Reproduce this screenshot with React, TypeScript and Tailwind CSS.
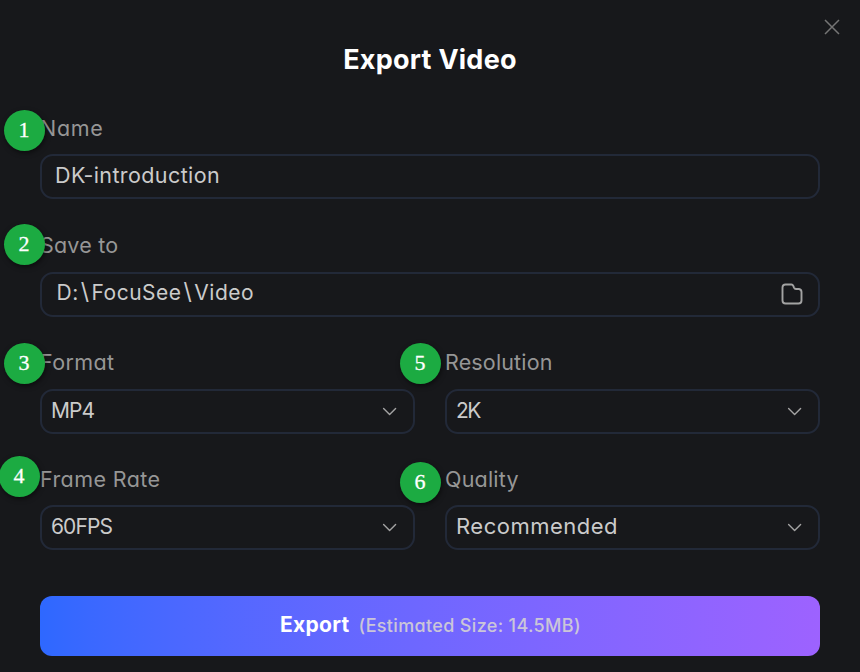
import type { ReactNode } from "react";
import clsx from "clsx";

interface FieldProps {
  step: number;
  label: string;
  labelClass?: string;
  badgeClass: string;
  children: ReactNode;
}

function Field({ step, label, labelClass, badgeClass, children }: FieldProps) {
  return (
    <div className="relative">
      <div className="h-[26px] text-[21.5px] leading-[26px] text-[#969696]">
        <span className={clsx("whitespace-pre", labelClass)}>{label}</span>
      </div>
      <span
        className={clsx(
          "absolute flex h-[41px] w-[41px] justify-center rounded-full bg-[#1cab42] font-['Liberation_Serif',serif] text-[22px] leading-[40px] text-white shadow-[1px_2px_5px_rgba(0,0,0,0.5)] [-webkit-text-stroke:0.3px_white]",
          badgeClass
        )}
      >
        {step}
      </span>
      {children}
    </div>
  );
}

function Chevron() {
  return (
    <svg className="h-[10px] w-4" viewBox="0 0 16 10" fill="none" stroke="#a3a3a3" strokeWidth="1.4" strokeLinecap="round" strokeLinejoin="round">
      <path d="M1.6 1.6 7.6 7.6 13.6 1.6" />
    </svg>
  );
}

interface BoxProps {
  value: ReactNode;
  className: string;
  valueClass?: string;
  icon?: ReactNode;
}

function Box({ value, className, valueClass, icon }: BoxProps) {
  return (
    <div
      className={clsx(
        "flex h-[45px] items-center justify-between rounded-[13px] border-2 border-[#222938] pr-[15px] text-[21px] leading-[26px] text-[#cbcbcb]",
        className
      )}
    >
      <span className={clsx("whitespace-pre", valueClass)}>{value}</span>
      {icon}
    </div>
  );
}

export default function App() {
  return (
    <div className="flex h-[672px] w-[860px] flex-col overflow-hidden bg-[#17181b] px-10 font-['Inter','Open_Sans',sans-serif] [font-feature-settings:'cv11']">
      <header className="relative flex h-[115px] shrink-0 justify-center pt-[42px]">
        <h1 className="h-9 text-[27px] leading-9 font-bold tracking-[0.25px] text-white">Export Video</h1>
        <button className="absolute top-[19px] -right-5 h-4 w-4" aria-label="Close">
          <svg viewBox="0 0 16 16" fill="none" stroke="#757575" strokeWidth="1.5">
            <path d="M1 1 15 15M15 1 1 15" />
          </svg>
        </button>
      </header>

      <div className="h-[117px] shrink-0">
        <Field step={1} label="Name" labelClass="tracking-[0.7px]" badgeClass="-left-[36.5px] -top-[5px]">
          <Box value="DK-introduction" className="mt-[13px] pl-[13px]" valueClass="pb-1 text-[21.5px] tracking-[0.4px]" />
        </Field>
      </div>

      <div className="h-[117px] shrink-0">
        <Field step={2} label="Save to" labelClass="tracking-[0.2px]" badgeClass="-left-[36.5px] -top-[8px]">
          <Box
            value={
              <>
                D:<span className="mx-[2px] text-[23px]">\</span>FocuSee<span className="mx-[2px] text-[23px]">\</span>Video
              </>
            }
            className="mt-[14px] pl-[14.5px]"
            valueClass="pb-1 tracking-[0.5px]"
            icon={
              <svg className="mb-px h-[22px] w-[22px]" viewBox="0 0 22 22" fill="none" stroke="#a3a3a3" strokeWidth="1.9" strokeLinejoin="round">
                <path d="M4.5 1.5H10.4Q11.7 1.5 12.3 2.8L13 4.6Q13.6 6 15 6H18Q20.5 6.4 20.5 9V17.5Q20.5 20.5 17.5 20.5H4.5Q1.5 20.5 1.5 17.5V4.5Q1.5 1.5 4.5 1.5Z" />
              </svg>
            }
          />
        </Field>
      </div>

      <div className="grid shrink-0 grid-cols-2 gap-x-[30px]">
        <div className="h-[117px]">
          <Field step={3} label="Format" labelClass="tracking-[0.35px]" badgeClass="-left-[36.5px] -top-[6px]">
            <Box value="MP4" className="mt-[14px] pl-[9px]" valueClass="pb-0.5 tracking-[-1px]" icon={<Chevron />} />
          </Field>
        </div>
        <div className="h-[117px]">
          <Field step={5} label="Resolution" labelClass="tracking-[0.15px]" badgeClass="-left-[45.5px] -top-[6px]">
            <Box value="2K" className="mt-[14px] pl-[9px]" valueClass="pb-0.5 tracking-[-1.5px]" icon={<Chevron />} />
          </Field>
        </div>
        <Field step={4} label="Frame Rate" labelClass="tracking-[0.4px]" badgeClass="-left-[41.5px] -top-[10px]">
          <Box value="60FPS" className="mt-[13px] pl-[9px]" valueClass="pb-0.5 tracking-[-0.9px]" icon={<Chevron />} />
        </Field>
        <Field step={6} label="Quality" labelClass="tracking-[0.2px]" badgeClass="-left-[45.5px] -top-[4px]">
          <Box value="Recommended" className="mt-[13px] pl-[9px]" valueClass="pb-1 text-[22px] tracking-[0.5px]" icon={<Chevron />} />
        </Field>
      </div>

      <button className="mt-[46px] flex h-[60px] shrink-0 items-baseline justify-center gap-[9px] rounded-xl bg-linear-to-r from-[#2e68ff] to-[#9d62ff] pt-[14px] pl-px whitespace-pre">
        <span className="text-[21px] leading-[30px] font-bold tracking-[0.3px] text-white">Export</span>
        <span className="text-[18px] leading-[30px] font-medium tracking-[0.34px] text-[#cbc6d8]">(Estimated Size: 14.5MB)</span>
      </button>
    </div>
  );
}
